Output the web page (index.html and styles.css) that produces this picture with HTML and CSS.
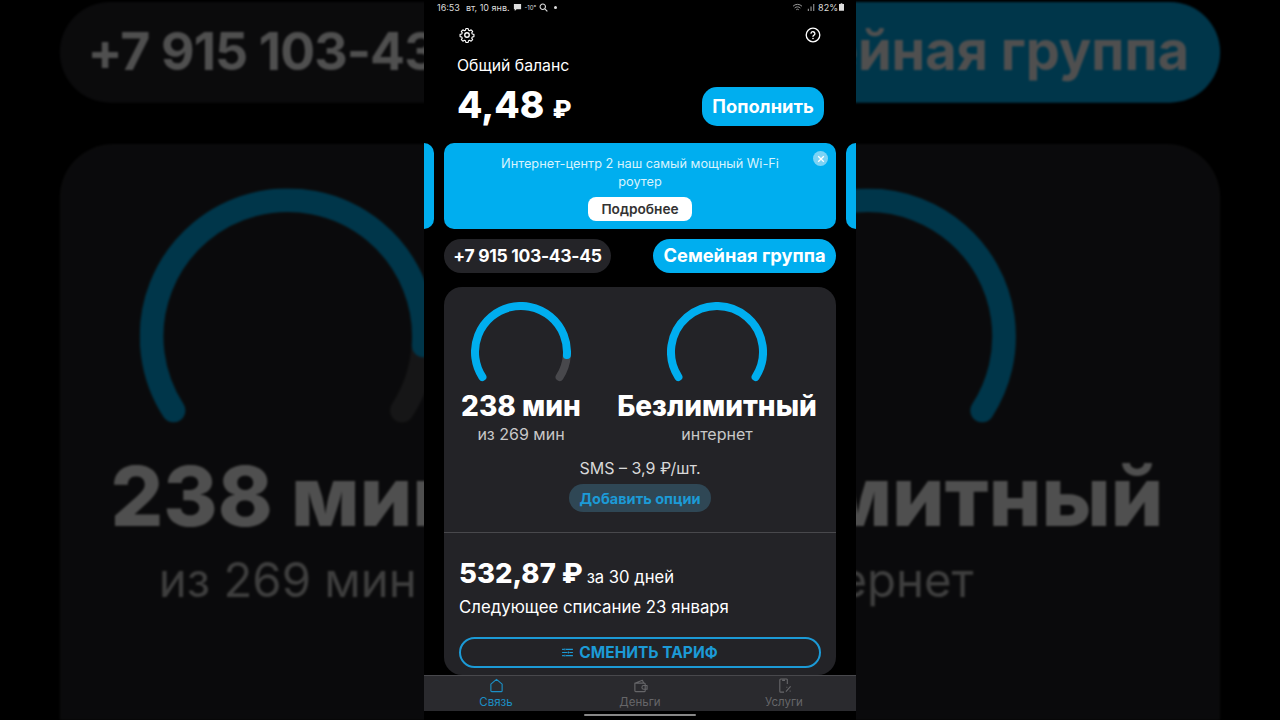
FILE: index.html
```html
<!DOCTYPE html>
<html lang="ru">
<head>
    <meta charset="UTF-8">
    <meta name="viewport" content="width=device-width, initial-scale=1.0">
    <title>Общий баланс</title>
    <link rel="stylesheet" href="styles.css">
</head>
<body>

<!-- blurred copy of the screen behind the phone video -->
<div class="backdrop" aria-hidden="true">
    <div class="sheet">
        <div class="contact-row">
            <div class="pill pill-dark">+7 915 103-43-45</div>
            <div class="pill pill-blue">Семейная группа</div>
        </div>
        <div class="usage-card">
            <div class="gauges">
                <div class="gauge">
                    <svg class="arc" viewBox="0 0 100 80">
                        <path class="arc-rest" d="M95.900 53A46 46 0 0 1 88.600 75"/>
                        <path class="arc-used" d="M11.400 75A46 46 0 1 1 95.900 53"/>
                    </svg>
                    <div class="gauge-title">238 мин</div>
                    <div class="gauge-sub">из 269 мин</div>
                </div>
                <div class="gauge">
                    <svg class="arc" viewBox="0 0 100 80">
                        <path class="arc-used" d="M11.400 75A46 46 0 1 1 88.600 75"/>
                    </svg>
                    <div class="gauge-title">Безлимитный</div>
                    <div class="gauge-sub">интернет</div>
                </div>
            </div>
        </div>
    </div>
</div>

<div class="phone">
    <div class="status-bar">
        <div class="status-left">
            <span class="status-time">16:53</span>
            <span>вт, 10 янв.</span>
            <svg class="status-icon" viewBox="0 0 10 10"><path d="M1 1h8v6H4L2 9V7H1z" fill="#ddd"/></svg>
            <span class="status-temp">-10°</span>
            <svg class="status-icon" viewBox="0 0 10 10"><circle cx="4.200" cy="4.200" r="3" fill="none" stroke="#ddd" stroke-width="1.200"/><path d="M6.500 6.500L9.300 9.300" stroke="#ddd" stroke-width="1.300"/></svg>
            <span class="status-dot"></span>
        </div>
        <div class="status-right">
            <svg class="status-icon wifi" viewBox="0 0 12 10"><path d="M1 3.600a7 7 0 0 1 10 0M2.800 5.600a4.500 4.500 0 0 1 6.400 0M4.600 7.500a2 2 0 0 1 2.800 0" fill="none" stroke="#999" stroke-width="1.100"/></svg>
            <svg class="status-icon" viewBox="0 0 10 10"><path d="M2 6.500h1.200V9H2zM5 4h1.200v5H5zM8 1h1.200v8H8z" fill="#999"/></svg>
            <span>82%</span>
            <svg class="battery" viewBox="0 0 6 9"><path d="M2 0h2v1h2v8H0V1h2z" fill="#ddd"/></svg>
        </div>
    </div>

    <div class="top-icons">
        <svg class="top-icon" viewBox="0 0 24 24">
            <path d="M10 2h4l.7 3 2 .9 2.600-1.600 2.800 2.800-1.600 2.600.9 2 3 .7v4l-3 .7-.9 2 1.600 2.600-2.800 2.800-2.600-1.600-2 .9-.7 3h-4l-.7-3-2-.9-2.600 1.600-2.800-2.800 1.600-2.600-.9-2-3-.7v-4l3-.7.9-2-1.600-2.600 2.800-2.800 2.600 1.600 2-.9z" transform="translate(12 12) scale(.84) translate(-12 -13.500)"/>
            <circle cx="12" cy="12" r="3.400"/>
        </svg>
        <svg class="top-icon" viewBox="0 0 24 24">
            <circle cx="12" cy="12" r="10.200"/>
            <path d="M9 9.300a3 3 0 0 1 5.900.7c0 2-2.900 2.400-2.900 4"/>
            <circle class="dot" cx="12" cy="17.300" r="1.200"/>
        </svg>
    </div>

    <div class="balance-label">Общий баланс</div>
    <div class="balance-row">
        <div class="balance-sum">4,48 <span class="rub">₽</span></div>
        <button class="topup">Пополнить</button>
    </div>

    <div class="carousel">
        <div class="slide-edge slide-prev"></div>
        <div class="banner">
            <p class="banner-text">Интернет-центр 2 наш самый мощный Wi-Fi роутер</p>
            <button class="banner-more">Подробнее</button>
            <span class="banner-close">
                <svg viewBox="0 0 10 10"><path d="M2.200 2.200l5.600 5.600M7.800 2.200L2.200 7.800"/></svg>
            </span>
        </div>
        <div class="slide-edge slide-next"></div>
    </div>

    <div class="sheet">
        <div class="contact-row">
            <div class="pill pill-dark">+7 915 103-43-45</div>
            <div class="pill pill-blue">Семейная группа</div>
        </div>

        <div class="usage-card">
            <div class="gauges">
                <div class="gauge">
                    <svg class="arc" viewBox="0 0 100 80">
                        <path class="arc-rest" d="M95.900 53A46 46 0 0 1 88.600 75"/>
                        <path class="arc-used" d="M11.400 75A46 46 0 1 1 95.900 53"/>
                    </svg>
                    <div class="gauge-title">238 мин</div>
                    <div class="gauge-sub">из 269 мин</div>
                </div>
                <div class="gauge">
                    <svg class="arc" viewBox="0 0 100 80">
                        <path class="arc-used" d="M11.400 75A46 46 0 1 1 88.600 75"/>
                    </svg>
                    <div class="gauge-title">Безлимитный</div>
                    <div class="gauge-sub">интернет</div>
                </div>
            </div>

            <div class="sms-line">SMS – 3,9 ₽/шт.</div>
            <button class="add-options">Добавить опции</button>

            <div class="tariff">
                <div class="price-row">
                    <span class="price">532,87 ₽</span>
                    <span class="price-period">за 30 дней</span>
                </div>
                <div class="next-charge">Следующее списание 23 января</div>
                <button class="change-tariff">
                    <svg viewBox="0 0 12 10"><path d="M0 1.500h2M4 1.500h8M0 5h6M8 5h4M0 8.500h2M4 8.500h8"/><path d="M3 .5v2M7 4v2M3 7.500v2"/></svg>
                    СМЕНИТЬ ТАРИФ
                </button>
            </div>
        </div>
    </div>

    <nav class="tabbar">
        <div class="tab tab-active">
            <svg viewBox="0 0 16 16"><path d="M2 6.500L8 1.500l6 5v7a1 1 0 0 1-1 1H3a1 1 0 0 1-1-1z"/></svg>
            <span>Связь</span>
        </div>
        <div class="tab">
            <svg viewBox="0 0 16 16"><path d="M2 5.500l8-3 1.500 3M2 5.500h10a1 1 0 0 1 1 1v7a1 1 0 0 1-1 1H3a1 1 0 0 1-1-1zM15 8h-3.500a2 2 0 0 0 0 4H15z"/></svg>
            <span>Деньги</span>
        </div>
        <div class="tab">
            <svg viewBox="0 0 16 16"><path d="M11 6.500V2a1 1 0 0 0-1-1H4a1 1 0 0 0-1 1v12a1 1 0 0 0 1 1h3.500M5.500 2.500h3"/><path d="M9.500 14.500l5-5.500M10 9.800h1M13.500 14h1"/></svg>
            <span>Услуги</span>
        </div>
    </nav>
    <div class="gesture-area"><span class="gesture-bar"></span></div>
</div>

</body>
</html>
```
FILE: styles.css
```css
* {
    box-sizing: border-box;
}
html, body {
    height: 100%;
}
body {
    margin: 0;
    background-color: #000;
    color: #fff;
    font-family: Inter, "Noto Sans", sans-serif;
    overflow: hidden;
}
button {
    font-family: inherit;
    border: none;
    padding: 0;
}

/* backdrop */
.backdrop {
    position: absolute;
    inset: 0;
    overflow: hidden;
    opacity: 0.31;
    filter: blur(1px);
}
.backdrop .sheet {
    width: 392px;
    margin: 2px auto 0;
    transform: scale(2.96);
    transform-origin: top center;
}
.backdrop .usage-card {
    min-height: 300px;
}

/* phone */
.phone {
    position: relative;
    width: 432px;
    height: 720px;
    margin: 0 auto;
    background-color: #000;
    display: flex;
    flex-direction: column;
    overflow: hidden;
}
.status-bar {
    height: 14px;
    padding: 0 12px 0 13px;
    display: flex;
    justify-content: space-between;
    align-items: center;
    font-size: 9px;
    color: #ddd;
}
.status-left, .status-right {
    display: flex;
    align-items: center;
    gap: 3px;
}
.status-time {
    margin-right: 3px;
}
.status-temp {
    font-size: 6px;
}
.status-icon {
    width: 9px;
    height: 9px;
}
.wifi {
    width: 11px;
}
.battery {
    width: 5px;
    height: 8px;
    margin-left: -2px;
}
.status-dot {
    width: 3px;
    height: 3px;
    margin-left: 3px;
    border-radius: 50%;
    background-color: #ddd;
}
.top-icons {
    margin-top: 13px;
    padding: 0 35px;
    display: flex;
    justify-content: space-between;
}
.top-icon {
    width: 16px;
    height: 16px;
    fill: none;
    stroke: #fff;
    stroke-width: 2;
    stroke-linejoin: round;
    stroke-linecap: round;
}
.top-icon .dot {
    fill: #fff;
    stroke: none;
}
.balance-label {
    margin-top: 14px;
    padding-left: 33px;
    font-size: 15.8px;
    line-height: 18px;
}
.balance-row {
    height: 39px;
    margin-top: 12px;
    padding: 0 32px 0 33px;
    display: flex;
    justify-content: space-between;
    align-items: center;
}
.balance-sum {
    font-size: 37px;
    font-weight: 800;
    line-height: 39px;
    white-space: nowrap;
}
.rub {
    font-size: 25px;
}
.topup {
    width: 122px;
    height: 39px;
    padding-bottom: 2px;
    border-radius: 15px;
    background-color: #00aeef;
    color: #fff;
    font-size: 18.3px;
    font-weight: 700;
}

/* banner */
.carousel {
    margin-top: 17px;
    display: flex;
    gap: 10px;
}
.slide-edge {
    width: 10px;
    background-color: #00aeef;
}
.slide-prev {
    border-radius: 0 10px 10px 0;
}
.slide-next {
    border-radius: 10px 0 0 10px;
}
.banner {
    position: relative;
    flex: 1;
    height: 86px;
    padding-top: 12px;
    border-radius: 10px;
    background-color: #00aeef;
    text-align: center;
}
.banner-text {
    width: 300px;
    margin: 0 auto;
    font-size: 12.75px;
    line-height: 18px;
    color: #d8f3fd;
}
.banner-more {
    display: block;
    width: 104px;
    height: 24px;
    margin: 6px auto 0;
    border-radius: 8px;
    background-color: #fff;
    color: #333;
    font-size: 13.7px;
    font-weight: 600;
}
.banner-close {
    position: absolute;
    top: 8px;
    right: 8px;
    width: 15px;
    height: 15px;
    border-radius: 50%;
    background-color: #7cd3f5;
    display: flex;
    align-items: center;
    justify-content: center;
}
.banner-close svg {
    width: 10px;
    height: 10px;
    fill: none;
    stroke: #fff;
    stroke-width: 1.3;
}

/* number and family pills */
.sheet {
    margin: 10px 20px 0;
}
.contact-row {
    display: flex;
    justify-content: space-between;
}
.pill {
    height: 34px;
    padding-bottom: 2px;
    border-radius: 17px;
    display: flex;
    align-items: center;
    justify-content: center;
    font-weight: 700;
    white-space: nowrap;
}
.pill-dark {
    width: 167px;
    background-color: #242428;
    font-size: 17.5px;
    letter-spacing: -0.3px;
}
.pill-blue {
    width: 183px;
    background-color: #00aeef;
    font-size: 18.3px;
}

/* usage card */
.usage-card {
    margin-top: 14px;
    padding-top: 15px;
    border-radius: 18px;
    background-color: #232327;
    text-align: center;
}
.gauges {
    display: grid;
    grid-template-columns: 154px 1fr;
}
.arc {
    display: block;
    width: 100px;
    height: 80px;
    margin: 0 auto;
    fill: none;
    stroke-width: 8;
    stroke-linecap: round;
}
.arc-used {
    stroke: #00aeef;
}
.arc-rest {
    stroke: #48484c;
}
.gauge-title {
    margin-top: 7px;
    font-size: 28px;
    font-weight: 800;
    line-height: 34px;
    white-space: nowrap;
}
.gauge-sub {
    margin-top: 1px;
    font-size: 16px;
    line-height: 20px;
    color: #c8c8c8;
}
.sms-line {
    margin-top: 14px;
    font-size: 16px;
    line-height: 20px;
    color: #d8d8d8;
}
.add-options {
    display: block;
    width: 142px;
    height: 28px;
    margin: 6px auto 0;
    border-radius: 14px;
    background-color: #2f4755;
    color: #1c9ad6;
    font-size: 14.5px;
    font-weight: 700;
}
.tariff {
    margin-top: 20px;
    padding: 23px 15px 7px;
    border-top: 1px solid #48484c;
    text-align: left;
}
.price-row {
    height: 34px;
    display: flex;
    align-items: baseline;
    gap: 4px;
    line-height: 34px;
}
.price {
    font-size: 27.5px;
    font-weight: 800;
}
.price-period {
    font-size: 16.6px;
}
.next-charge {
    margin-top: 7px;
    font-size: 16.8px;
    line-height: 20px;
}
.change-tariff {
    width: 362px;
    height: 31px;
    margin-top: 20px;
    border: 2px solid #1c9ad6;
    border-radius: 16px;
    background: none;
    color: #1c9ad6;
    font-size: 15.5px;
    font-weight: 700;
    display: flex;
    align-items: center;
    justify-content: center;
    gap: 6px;
}
.change-tariff svg {
    width: 11px;
    height: 9px;
    fill: none;
    stroke: #1c9ad6;
    stroke-width: 1.2;
}

/* bottom navigation */
.tabbar {
    position: absolute;
    left: 0;
    right: 0;
    bottom: 9px;
    height: 36px;
    border-top: 1px solid #48484c;
    background-color: #2a2a2e;
    display: grid;
    grid-template-columns: repeat(3, 144px);
}
.tab {
    display: flex;
    flex-direction: column;
    align-items: center;
    padding-top: 2px;
    font-size: 11.5px;
    line-height: 15px;
    color: #666669;
}
.tab svg {
    width: 15px;
    height: 15px;
    margin-bottom: 2px;
    fill: none;
    stroke: #666669;
    stroke-width: 1.2;
    stroke-linejoin: round;
}
.tab-active {
    color: #1c8fc4;
}
.tab-active svg {
    stroke: #1c8fc4;
}
.gesture-area {
    position: absolute;
    left: 0;
    right: 0;
    bottom: 0;
    height: 9px;
    display: flex;
    justify-content: center;
    padding-top: 3px;
    background-color: #000;
}
.gesture-bar {
    width: 112px;
    height: 2px;
    border-radius: 1px;
    background-color: #888;
}
```
